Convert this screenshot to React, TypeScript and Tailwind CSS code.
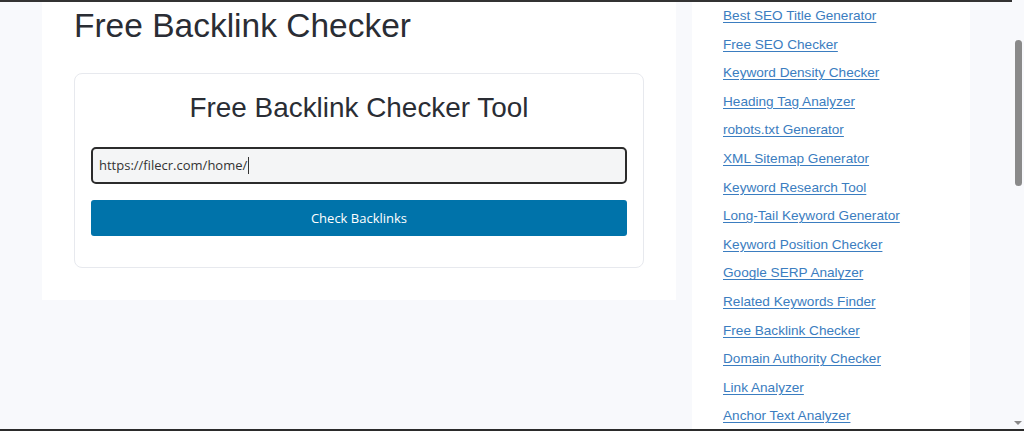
import React from "react";

const tools = [
  "Best SEO Title Generator",
  "Free SEO Checker",
  "Keyword Density Checker",
  "Heading Tag Analyzer",
  "robots.txt Generator",
  "XML Sitemap Generator",
  "Keyword Research Tool",
  "Long-Tail Keyword Generator",
  "Keyword Position Checker",
  "Google SERP Analyzer",
  "Related Keywords Finder",
  "Free Backlink Checker",
  "Domain Authority Checker",
  "Link Analyzer",
  "Anchor Text Analyzer",
];

function CheckerCard() {
  return (
    <div className="mt-[30px] w-[570px] rounded-lg border border-[#e7e9ee] bg-white px-4 pb-[31px] pt-5">
      <h2 className="text-center font-['Liberation_Sans',Arial,sans-serif] text-[27.9px] leading-none text-[#2a2d34]">
        Free Backlink Checker Tool
      </h2>

      {/* url field with caret */}
      <div className="mt-[26px] flex h-[37px] items-center rounded-[5px] border-2 border-[#2b2b2b] bg-[#f4f5f6] px-[6px] font-['Open_Sans',sans-serif] text-[13px] text-[#333]">
        <span>https://filecr.com/home/</span>
        <span className="ml-px h-[17px] w-px bg-[#333]" />
      </div>

      <button className="mt-4 flex h-9 w-full items-center justify-center rounded-[3px] bg-[#0073aa] font-['Open_Sans',sans-serif] text-[13px] text-white">
        Check Backlinks
      </button>
    </div>
  );
}

export default function App() {
  return (
    <div className="flex h-[431px] w-[1024px] flex-col overflow-hidden bg-[#f8f9fc]">
      <div className="h-[2px] w-[1012px] shrink-0 bg-[#333]" />

      <div className="flex min-h-0 flex-1">
        <div className="w-[42px] shrink-0" />

        {/* main panel */}
        <main className="h-[298px] w-[634px] shrink-0 bg-white px-8 pt-[7px]">
          <h1 className="font-['Liberation_Sans',Arial,sans-serif] text-[33.5px] leading-none text-[#2a2d34]">
            Free Backlink Checker
          </h1>
          <CheckerCard />
        </main>

        <div className="w-4 shrink-0" />

        {/* sidebar */}
        <aside className="w-[278px] shrink-0 bg-white pl-[31px]">
          <ul className="flex flex-col font-['Liberation_Sans',Arial,sans-serif] text-[13.6px] leading-[28.6px]">
            {tools.map((t) => (
              <li key={t} className="h-[28.6px]">
                <a href="#" className="text-[#3b7dc0] underline underline-offset-2">
                  {t}
                </a>
              </li>
            ))}
          </ul>
        </aside>

        <div className="flex-1" />

        {/* scrollbar */}
        <div className="flex w-3 shrink-0 flex-col items-center pt-[38px] pb-[4px]">
          <div className="h-[146px] w-[7px] rounded-full bg-[#8a8a8a]" />
          <div className="flex-1" />
          <div className="h-0 w-0 border-x-[4px] border-t-[4px] border-x-transparent border-t-[#888]" />
        </div>
      </div>

      <div className="h-[2px] w-full shrink-0 bg-[#2b2b2b]" />
    </div>
  );
}
